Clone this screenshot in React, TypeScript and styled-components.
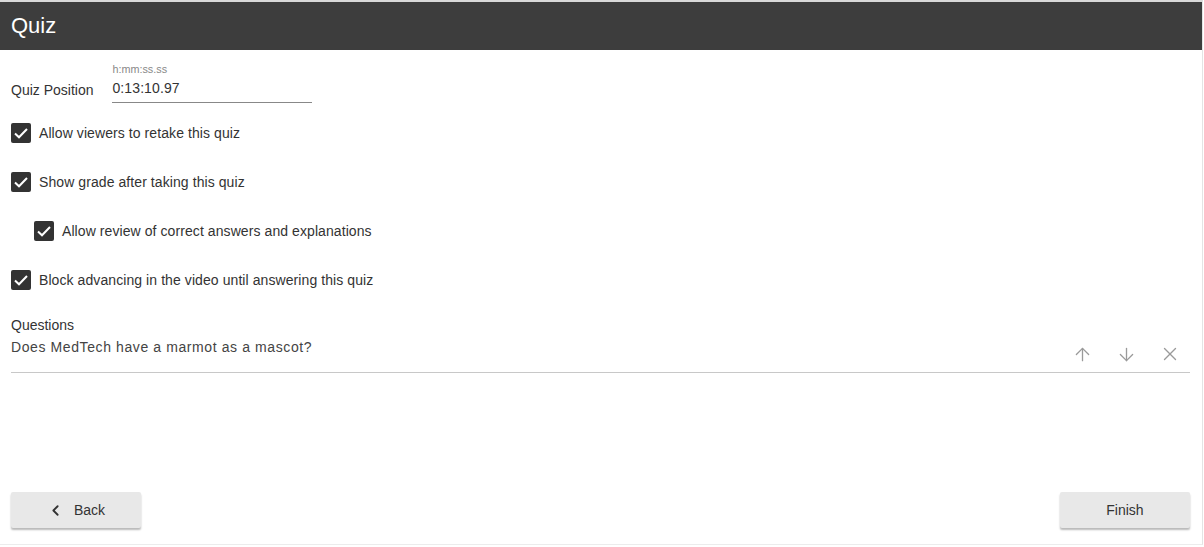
import styled, { createGlobalStyle } from "styled-components";
import { ArrowUp, ArrowDown, X, ChevronLeft } from "lucide-react";

const GlobalStyle = createGlobalStyle`
  body {
    margin: 0;
    background: #fff;
    font-family: "Liberation Sans", Arial, sans-serif;
    color: #333;
  }
`;

const Frame = styled.div`
  box-sizing: border-box;
  width: 1203px;
  height: 545px;
  border-top: 2px solid #d9d9d9;
  border-right: 1px solid #e4e4e4;
  border-bottom: 1px solid #ececec;
  display: flex;
  flex-direction: column;
`;

const Header = styled.header`
  height: 48px;
  background: #3d3d3d;
  color: #fff;
  display: flex;
  align-items: center;
  padding: 0 11px;
  font-size: 22px;
  flex-shrink: 0;
`;

const Body = styled.main`
  flex: 1;
  display: flex;
  flex-direction: column;
  padding: 0 12px 0 11px;
`;

const PositionRow = styled.div`
  display: flex;
  align-items: flex-end;
  margin-top: 13px;
  gap: 19px;
`;

const PositionLabel = styled.label`
  font-size: 14px;
  padding-bottom: 5px;
`;

const TimeField = styled.div`
  display: flex;
  flex-direction: column;
  width: 200px;
`;

const Caption = styled.span`
  font-size: 10.8px;
  color: #888;
  margin-bottom: 5px;
`;

const TimeInput = styled.input`
  border: none;
  border-bottom: 1px solid #888;
  font: 14px "Liberation Sans", Arial, sans-serif;
  letter-spacing: 0.1px;
  color: #333;
  padding: 0 0 6px 0;
  outline: none;
`;

const Checks = styled.div`
  display: flex;
  flex-direction: column;
  gap: 29px;
  margin-top: 20px;
`;

const CheckRow = styled.label<{ $indent?: boolean }>`
  display: flex;
  align-items: center;
  gap: 8px;
  font-size: 14px;
  letter-spacing: 0.08px;
  padding-left: ${({ $indent }) => ($indent ? "23px" : "0")};
`;

const Box = styled.span`
  width: 20px;
  height: 20px;
  border-radius: 2px;
  background: #333;
  display: flex;
  align-items: center;
  justify-content: center;
  flex-shrink: 0;
`;

const SectionTitle = styled.div`
  font-size: 14px;
  margin-top: 27px;
`;

const QuestionRow = styled.div`
  display: flex;
  align-items: flex-start;
  border-bottom: 1px solid #c8c8c8;
  height: 33px;
  margin-top: 6px;
`;

const QuestionText = styled.span`
  flex: 1;
  font-size: 14px;
  letter-spacing: 0.6px;
  color: #444;
`;

const IconButton = styled.button`
  box-sizing: border-box;
  border: none;
  background: none;
  padding: 0 0 0 4px;
  width: 44px;
  height: 24px;
  margin-top: 3px;
  display: flex;
  align-items: center;
  justify-content: center;
  color: #9a9a9a;
  cursor: pointer;
`;

const Footer = styled.footer`
  display: flex;
  justify-content: space-between;
  padding: 0 12px 16px 11px;
`;

const Button = styled.button`
  width: 130px;
  height: 36px;
  border: none;
  border-radius: 2px;
  background: #e8e8e8;
  box-shadow: 0 2px 2px rgba(0, 0, 0, 0.28);
  font: 14px "Liberation Sans", Arial, sans-serif;
  color: #333;
  display: flex;
  align-items: center;
  justify-content: center;
  gap: 10px;
  cursor: pointer;
`;

const options = [
  { text: "Allow viewers to retake this quiz" },
  { text: "Show grade after taking this quiz" },
  { text: "Allow review of correct answers and explanations", indent: true },
  { text: "Block advancing in the video until answering this quiz" },
];

const Check = () => (
  <Box>
    <svg width="18" height="18" viewBox="0 0 18 18">
      <path d="M3 9.5 L7 13.3 L15 5" fill="none" stroke="#fff" strokeWidth="2" />
    </svg>
  </Box>
);

export default function App() {
  return (
    <>
      <GlobalStyle />
      <Frame>
        <Header>Quiz</Header>
        <Body>
          <PositionRow>
            <PositionLabel>Quiz Position</PositionLabel>
            <TimeField>
              <Caption>h:mm:ss.ss</Caption>
              <TimeInput defaultValue="0:13:10.97" />
            </TimeField>
          </PositionRow>
          <Checks>
            {options.map((o) => (
              <CheckRow key={o.text} $indent={o.indent}>
                <Check />
                {o.text}
              </CheckRow>
            ))}
          </Checks>
          <SectionTitle>Questions</SectionTitle>
          <QuestionRow>
            <QuestionText>Does MedTech have a marmot as a mascot?</QuestionText>
            <IconButton aria-label="move up">
              <ArrowUp size={21} strokeWidth={1.5} />
            </IconButton>
            <IconButton aria-label="move down">
              <ArrowDown size={21} strokeWidth={1.5} />
            </IconButton>
            <IconButton aria-label="remove">
              <X size={22} strokeWidth={1.5} />
            </IconButton>
          </QuestionRow>
        </Body>
        <Footer>
          <Button>
            <ChevronLeft size={17} strokeWidth={2.6} />
            Back
          </Button>
          <Button>Finish</Button>
        </Footer>
      </Frame>
    </>
  );
}
